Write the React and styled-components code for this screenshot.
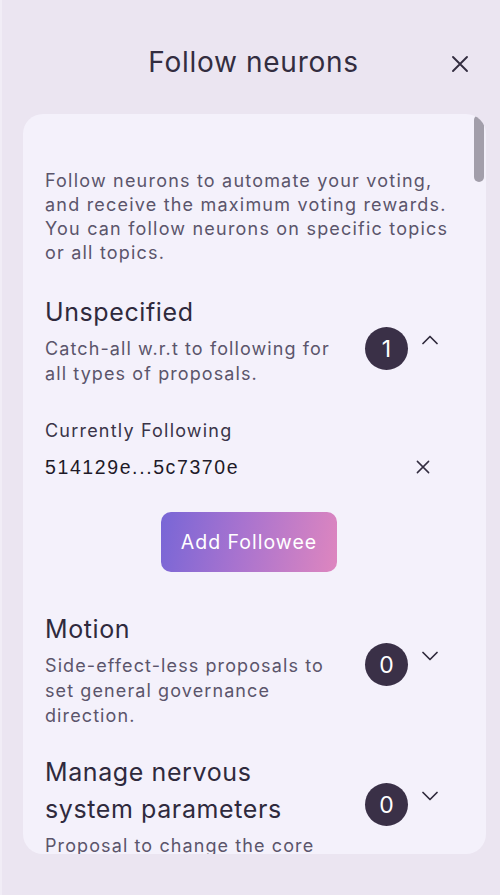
import React from "react";
import styled, { createGlobalStyle } from "styled-components";

const GlobalStyle = createGlobalStyle`
  html, body {
    margin: 0;
    padding: 0;
    background: #ebe5f1;
  }
  body {
    font-family: Inter, "Open Sans", sans-serif;
    color: #2f2a3d;
  }
`;

const Page = styled.div`
  width: 500px;
  height: 895px;
  box-sizing: border-box;
  border-left: 2px solid #f1edf6;
  background: #ebe5f1;
  display: flex;
  flex-direction: column;
  overflow: hidden;
`;

const Header = styled.header`
  display: grid;
  grid-template-columns: 1fr auto 1fr;
  align-items: center;
  height: 72px;
  margin-top: 26px;
  padding: 0 30px 0 21px;
`;

const Title = styled.h1`
  grid-column: 2;
  margin: 0 0 0 14px;
  font-size: 28px;
  font-weight: 400;
  letter-spacing: 0.7px;
  color: #332d40;
`;

const IconButton = styled.button`
  justify-self: end;
  border: 0;
  background: none;
  padding: 0;
  margin: ${p => p.$top || 0}px 0 0 0;
  display: flex;
  color: #332d40;
  cursor: pointer;
`;

const Card = styled.section`
  position: relative;
  margin: 16px 14px 0 21px;
  height: 740px;
  border-radius: 20px;
  background: #f4f1fb;
  overflow: hidden;
`;

const ScrollThumb = styled.div`
  position: absolute;
  top: 1px;
  right: 2px;
  width: 10px;
  height: 67px;
  border-radius: 5px;
  background: #a29eaa;
`;

const Content = styled.div`
  padding: 55px 33px 0 22px;
`;

const Intro = styled.p`
  margin: 0;
  font-size: 18px;
  line-height: 24px;
  letter-spacing: 1.2px;
  color: #5b556b;
`;

const Topic = styled.div`
  margin-top: ${p => p.$gap}px;
`;

const TopicRow = styled.div`
  display: flex;
  align-items: flex-start;
`;

const TopicText = styled.div`
  flex: 1;
  max-width: 290px;
`;

const TopicTitle = styled.h2`
  margin: 0;
  font-size: 25px;
  line-height: 37px;
  font-weight: 400;
  letter-spacing: 0.6px;
  color: #2f2a3d;
`;

const TopicDesc = styled.p`
  margin: 5px 0 0;
  font-size: 18px;
  line-height: 25px;
  letter-spacing: 1.1px;
  color: #5b556b;
`;

const Controls = styled.div`
  margin: ${p => p.$top}px 15px 0 auto;
  display: flex;
  align-items: flex-start;
  gap: 14px;
`;

const Badge = styled.span`
  width: 43px;
  height: 43px;
  border-radius: 50%;
  background: #3a3047;
  color: #fff;
  font-size: 23px;
  display: flex;
  align-items: center;
  justify-content: center;
`;

const Chevron = styled.span`
  display: flex;
  margin-top: 8px;
  color: #2f2a3d;
`;

const Following = styled.div`
  margin-top: 33px;
`;

const Label = styled.div`
  font-size: 18px;
  line-height: 24px;
  letter-spacing: 1.2px;
  color: #3a3448;
`;

const FolloweeRow = styled.div`
  margin-top: 12px;
  display: flex;
  align-items: center;
  justify-content: space-between;
  padding-right: 22px;
`;

const Hash = styled.span`
  font-family: "Liberation Sans", Arial, sans-serif;
  font-size: 19.5px;
  line-height: 24px;
  letter-spacing: 1.6px;
  color: #1e1a28;
`;

const ButtonRow = styled.div`
  display: flex;
  justify-content: center;
  margin-top: 33px;
`;

const GradientButton = styled.button`
  width: 176px;
  height: 60px;
  border: 0;
  border-radius: 10px;
  background: linear-gradient(100deg, #7866d6 0%, #a873cf 45%, #de86bf 100%);
  color: #fff;
  font-family: inherit;
  font-size: 19.5px;
  letter-spacing: 1px;
  cursor: pointer;
`;

const Close = ({ size = 20 }) => (
  <svg width={size} height={size} viewBox="0 0 20 20" fill="none">
    <path d="M3 3l14 14M17 3L3 17" stroke="currentColor" strokeWidth="1.9" strokeLinecap="round" />
  </svg>
);

const Caret = ({ up }) => (
  <svg width="16" height="10" viewBox="0 0 16 10" fill="none">
    <path
      d={up ? "M1 8.5L8 1.5l7 7" : "M1 1.5l7 7 7-7"}
      stroke="currentColor"
      strokeWidth="1.7"
      strokeLinecap="round"
      strokeLinejoin="round"
    />
  </svg>
);

const topics = [
  {
    title: "Unspecified",
    desc: "Catch-all w.r.t to following for all types of proposals.",
    count: 1,
    open: true,
    followees: ["514129e...5c7370e"],
    gap: 29,
    top: 33,
  },
  {
    title: "Motion",
    desc: "Side-effect-less proposals to set general governance direction.",
    count: 0,
    gap: 39,
    top: 32,
  },
  {
    title: "Manage nervous system parameters",
    desc: "Proposal to change the core parameters of ledger canister.",
    count: 0,
    gap: 26,
    top: 29,
  },
];

export default function App() {
  return (
    <Page>
      <GlobalStyle />
      <Header>
        <Title>Follow neurons</Title>
        <IconButton aria-label="close" $top={3}>
          <Close />
        </IconButton>
      </Header>
      <Card>
        <Content>
          <Intro>
            Follow neurons to automate your voting, and receive the maximum voting rewards.
            You can follow neurons on specific topics or all topics.
          </Intro>
          {topics.map(t => (
            <Topic key={t.title} $gap={t.gap}>
              <TopicRow>
                <TopicText>
                  <TopicTitle>{t.title}</TopicTitle>
                  <TopicDesc>{t.desc}</TopicDesc>
                </TopicText>
                <Controls $top={t.top}>
                  <Badge>{t.count}</Badge>
                  <Chevron>
                    <Caret up={t.open} />
                  </Chevron>
                </Controls>
              </TopicRow>
              {t.open && (
                <>
                  <Following>
                    <Label>Currently Following</Label>
                    {t.followees.map(f => (
                      <FolloweeRow key={f}>
                        <Hash>{f}</Hash>
                        <IconButton aria-label="remove">
                          <Close size={16} />
                        </IconButton>
                      </FolloweeRow>
                    ))}
                  </Following>
                  <ButtonRow>
                    <GradientButton>Add Followee</GradientButton>
                  </ButtonRow>
                </>
              )}
            </Topic>
          ))}
        </Content>
        <ScrollThumb />
      </Card>
    </Page>
  );
}
